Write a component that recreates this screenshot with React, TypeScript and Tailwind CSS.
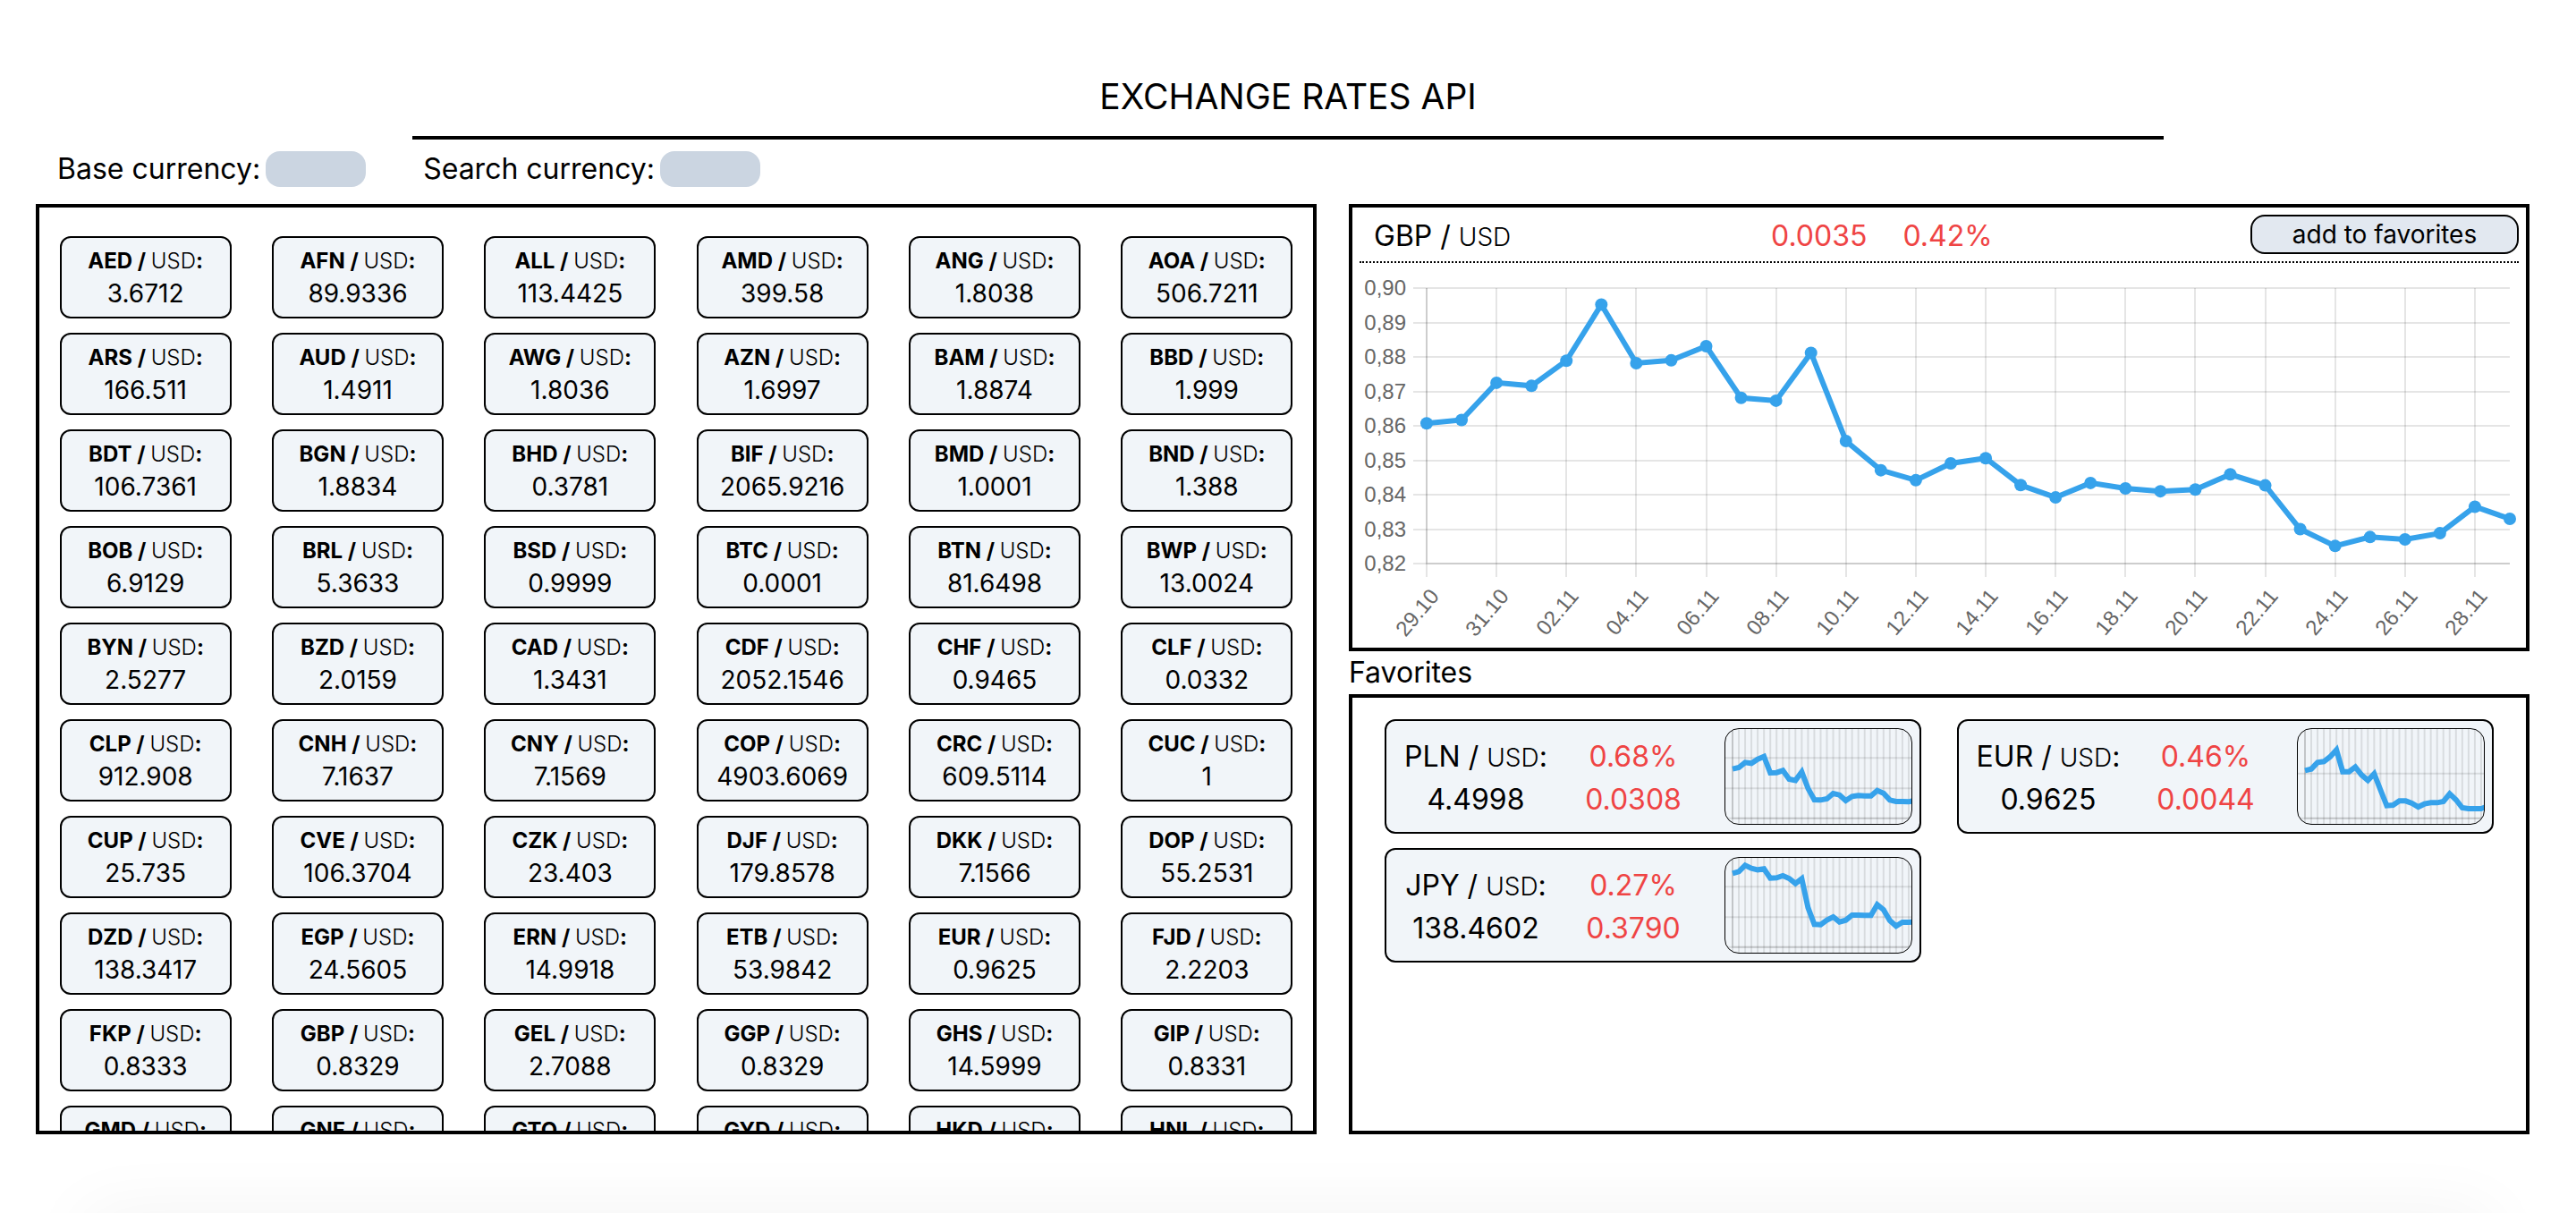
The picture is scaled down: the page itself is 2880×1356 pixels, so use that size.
import React from "react";

const BASE = "USD";

const RATES: [string, string][] = [
  ["AED", "3.6712"], ["AFN", "89.9336"], ["ALL", "113.4425"], ["AMD", "399.58"], ["ANG", "1.8038"], ["AOA", "506.7211"],
  ["ARS", "166.511"], ["AUD", "1.4911"], ["AWG", "1.8036"], ["AZN", "1.6997"], ["BAM", "1.8874"], ["BBD", "1.999"],
  ["BDT", "106.7361"], ["BGN", "1.8834"], ["BHD", "0.3781"], ["BIF", "2065.9216"], ["BMD", "1.0001"], ["BND", "1.388"],
  ["BOB", "6.9129"], ["BRL", "5.3633"], ["BSD", "0.9999"], ["BTC", "0.0001"], ["BTN", "81.6498"], ["BWP", "13.0024"],
  ["BYN", "2.5277"], ["BZD", "2.0159"], ["CAD", "1.3431"], ["CDF", "2052.1546"], ["CHF", "0.9465"], ["CLF", "0.0332"],
  ["CLP", "912.908"], ["CNH", "7.1637"], ["CNY", "7.1569"], ["COP", "4903.6069"], ["CRC", "609.5114"], ["CUC", "1"],
  ["CUP", "25.735"], ["CVE", "106.3704"], ["CZK", "23.403"], ["DJF", "179.8578"], ["DKK", "7.1566"], ["DOP", "55.2531"],
  ["DZD", "138.3417"], ["EGP", "24.5605"], ["ERN", "14.9918"], ["ETB", "53.9842"], ["EUR", "0.9625"], ["FJD", "2.2203"],
  ["FKP", "0.8333"], ["GBP", "0.8329"], ["GEL", "2.7088"], ["GGP", "0.8329"], ["GHS", "14.5999"], ["GIP", "0.8331"],
  ["GMD", "61.9"], ["GNF", "8608.2"], ["GTQ", "7.8"], ["GYD", "209.2"], ["HKD", "7.81"], ["HNL", "24.7"],
];

const GBP_HISTORY = [
  0.8607, 0.8617, 0.8725, 0.8716, 0.8789, 0.8952, 0.8782, 0.879, 0.8831, 0.8681, 0.8673,
  0.8812, 0.8556, 0.8471, 0.8442, 0.8491, 0.8506, 0.8428, 0.8392, 0.8434, 0.8418, 0.841,
  0.8415, 0.8459, 0.8427, 0.83, 0.8251, 0.8277, 0.827, 0.8288, 0.8365, 0.833,
];

const X_LABELS = [
  "29.10", "31.10", "02.11", "04.11", "06.11", "08.11", "10.11", "12.11",
  "14.11", "16.11", "18.11", "20.11", "22.11", "24.11", "26.11", "28.11",
];

const Y_LABELS = ["0,90", "0,89", "0,88", "0,87", "0,86", "0,85", "0,84", "0,83", "0,82"];

type Favorite = {
  code: string;
  rate: string;
  percent: string;
  diff: string;
  grid: number[];
  points: number[];
};

const FAVORITES: Favorite[] = [
  {
    code: "PLN", rate: "4.4998", percent: "0.68%", diff: "0.0308", grid: [97, 199],
    points: [134, 129, 112, 115, 101, 92, 147, 146, 139, 168, 172, 144, 199, 237, 238, 234, 216, 221, 240, 226, 223, 224, 224, 206, 215, 238, 243, 243, 244, 239],
  },
  {
    code: "EUR", rate: "0.9625", percent: "0.46%", diff: "0.0044", grid: [149],
    points: [139, 134, 112, 109, 93, 70, 143, 143, 127, 154, 172, 150, 204, 257, 255, 241, 241, 249, 261, 251, 247, 247, 243, 217, 237, 264, 267, 267, 267, 259],
  },
  {
    code: "JPY", rate: "138.4602", percent: "0.27%", diff: "0.3790", grid: [97, 199],
    points: [52, 46, 25, 35, 40, 37, 68, 67, 60, 69, 86, 70, 167, 223, 224, 209, 198, 215, 209, 192, 192, 193, 193, 157, 174, 210, 229, 216, 216, 215],
  },
];

function RateCard({ code, value }: { code: string; value: string }) {
  return (
    <li className="my-2 flex h-[92px] w-48 flex-col items-center justify-center rounded-xl border-2 border-black bg-slate-100">
      <span className="text-2xl leading-9 font-bold">
        {code} / <span className="font-light">{BASE}</span>:
      </span>
      <span className="text-[28px] leading-9">{value}</span>
    </li>
  );
}

function HistoryChart() {
  const left = 83;
  const right = 1294;
  const top = 28;
  const bottom = 336;
  const step = (right - left) / (GBP_HISTORY.length - 1);
  const points = GBP_HISTORY.map((rate, i) => [
    left + i * step,
    top + ((0.9 - rate) / 0.08) * (bottom - top),
  ]);
  return (
    <svg viewBox="0 0 1312 430" className="block w-full" role="img" aria-label="GBP to USD history">
      {Y_LABELS.map((label, i) => {
        const y = Math.round(top + (i * (bottom - top)) / 8);
        return (
          <g key={label}>
            <line x1={68} x2={right} y1={y} y2={y} stroke="#000" strokeOpacity={0.1} strokeWidth={2} />
            <text x={60} y={y + 8} textAnchor="end" fontSize={24} fill="#666" className="font-['Liberation_Sans',sans-serif]">
              {label}
            </text>
          </g>
        );
      })}
      {X_LABELS.map((label, i) => {
        const x = Math.round(left + i * 2 * step);
        return (
          <g key={label}>
            <line x1={x} x2={x} y1={top} y2={bottom + 15} stroke="#000" strokeOpacity={0.1} strokeWidth={2} />
            <text
              x={x + 15}
              y={373}
              transform={`rotate(-50 ${x + 15} 373)`}
              textAnchor="end"
              fontSize={24}
              fill="#666"
              className="font-['Liberation_Sans',sans-serif]"
            >
              {label}
            </text>
          </g>
        );
      })}
      <path d={`M${left} ${top}V${bottom}H${right}`} fill="none" stroke="#000" strokeOpacity={0.1} strokeWidth={2} />
      <polyline points={points.map((p) => p.join(",")).join(" ")} fill="none" stroke="#36a2eb" strokeWidth={6} />
      {points.map(([x, y]) => (
        <circle key={x} cx={x} cy={y} r={7} fill="#36a2eb" />
      ))}
    </svg>
  );
}

function Sparkline({ points, grid }: { points: number[]; grid: number[] }) {
  const at = (i: number) => 24 + i * 21.1;
  return (
    <svg viewBox="0 0 624 318" preserveAspectRatio="none" className="block h-full w-full" aria-hidden="true">
      <g stroke="#000" strokeOpacity={0.1} strokeWidth={6}>
        {points.map((_, i) => (
          <line key={i} x1={at(i)} x2={at(i)} y1={0} y2={318} />
        ))}
        {grid.map((y) => (
          <line key={y} x1={0} x2={624} y1={y} y2={y} />
        ))}
        <line x1={0} x2={624} y1={299} y2={299} />
        <path d="M24 0V299H624" fill="none" />
      </g>
      <polyline points={points.map((y, i) => `${at(i)},${y}`).join(" ")} fill="none" stroke="#36a2eb" strokeWidth={18} />
    </svg>
  );
}

function FavoriteCard({ item }: { item: Favorite }) {
  return (
    <li className="mx-5 my-2 flex h-32 items-center rounded-xl border-2 border-black bg-slate-100 p-2 text-[32px] leading-[48px]">
      <div className="w-[184px] pt-1 text-center whitespace-nowrap">
        <div>
          {item.code} / <span className="text-[28px] leading-none font-light">{BASE}</span>:
        </div>
        <div>{item.rate}</div>
      </div>
      <div className="w-[168px] pt-1 text-center text-[#ef4444]">
        <div>{item.percent}</div>
        <div>{item.diff}</div>
      </div>
      <div className="ml-auto h-full w-[210px] overflow-hidden rounded-2xl border border-black">
        <Sparkline points={item.points} grid={item.grid} />
      </div>
    </li>
  );
}

export default function App() {
  return (
    <div className="flex h-screen flex-col overflow-hidden bg-white px-10 font-[Inter,sans-serif] text-black">
      <header className="flex justify-center pt-16">
        <h1 className="w-[68vw] border-b-4 border-black py-3.5 text-center text-[39px] leading-[60px]">
          EXCHANGE RATES API
        </h1>
      </header>
      <form className="flex h-[72px] items-center gap-16 px-6 pb-1.5 text-[32px]">
        <div className="flex items-center gap-1.5">
          <label htmlFor="base">Base currency:</label>
          <input id="base" type="text" className="h-10 w-28 rounded-2xl bg-[#cbd5e1] px-2 outline-none" />
        </div>
        <div className="flex items-center gap-1.5">
          <label htmlFor="search">Search currency:</label>
          <input id="search" type="text" className="h-10 w-28 rounded-2xl bg-[#cbd5e1] px-2 outline-none" />
        </div>
      </form>
      <main className="mr-3 grid min-h-0 flex-1 grid-cols-[1432fr_1320fr] grid-rows-[minmax(0,1fr)] gap-9 pb-[88px]">
        <section className="overflow-y-auto border-4 border-black pt-6 [scrollbar-width:none]">
          <ul className="grid grid-cols-6 justify-items-center">
            {RATES.map(([code, value]) => (
              <RateCard key={code} code={code} value={value} />
            ))}
          </ul>
        </section>
        <div className="flex min-h-0 flex-col">
          <section className="border-4 border-black">
            <div className="mx-2 flex items-center border-b-2 border-dotted border-black py-2 text-[32px] leading-10">
              <h2 className="w-[460px] pt-1 pl-4">
                GBP / <span className="text-[28px] leading-none font-light">{BASE}</span>
              </h2>
              <div className="flex flex-1 gap-10 pt-1 text-[#ef4444]">
                <span>0.0035</span>
                <span>0.42%</span>
              </div>
              <button type="button" className="h-11 w-[300px] rounded-2xl border-2 border-black bg-slate-200 text-[28px] leading-10">
                add to favorites
              </button>
            </div>
            <HistoryChart />
          </section>
          <h2 className="text-[32px] leading-[48px]">Favorites</h2>
          <section className="min-h-0 flex-1 overflow-hidden border-4 border-black p-4">
            <ul className="grid grid-cols-2">
              {FAVORITES.map((item) => (
                <FavoriteCard key={item.code} item={item} />
              ))}
            </ul>
          </section>
        </div>
      </main>
      <div className="mx-24 h-0 shadow-[0_40px_80px_40px_rgba(0,0,0,0.05)]" />
    </div>
  );
}
